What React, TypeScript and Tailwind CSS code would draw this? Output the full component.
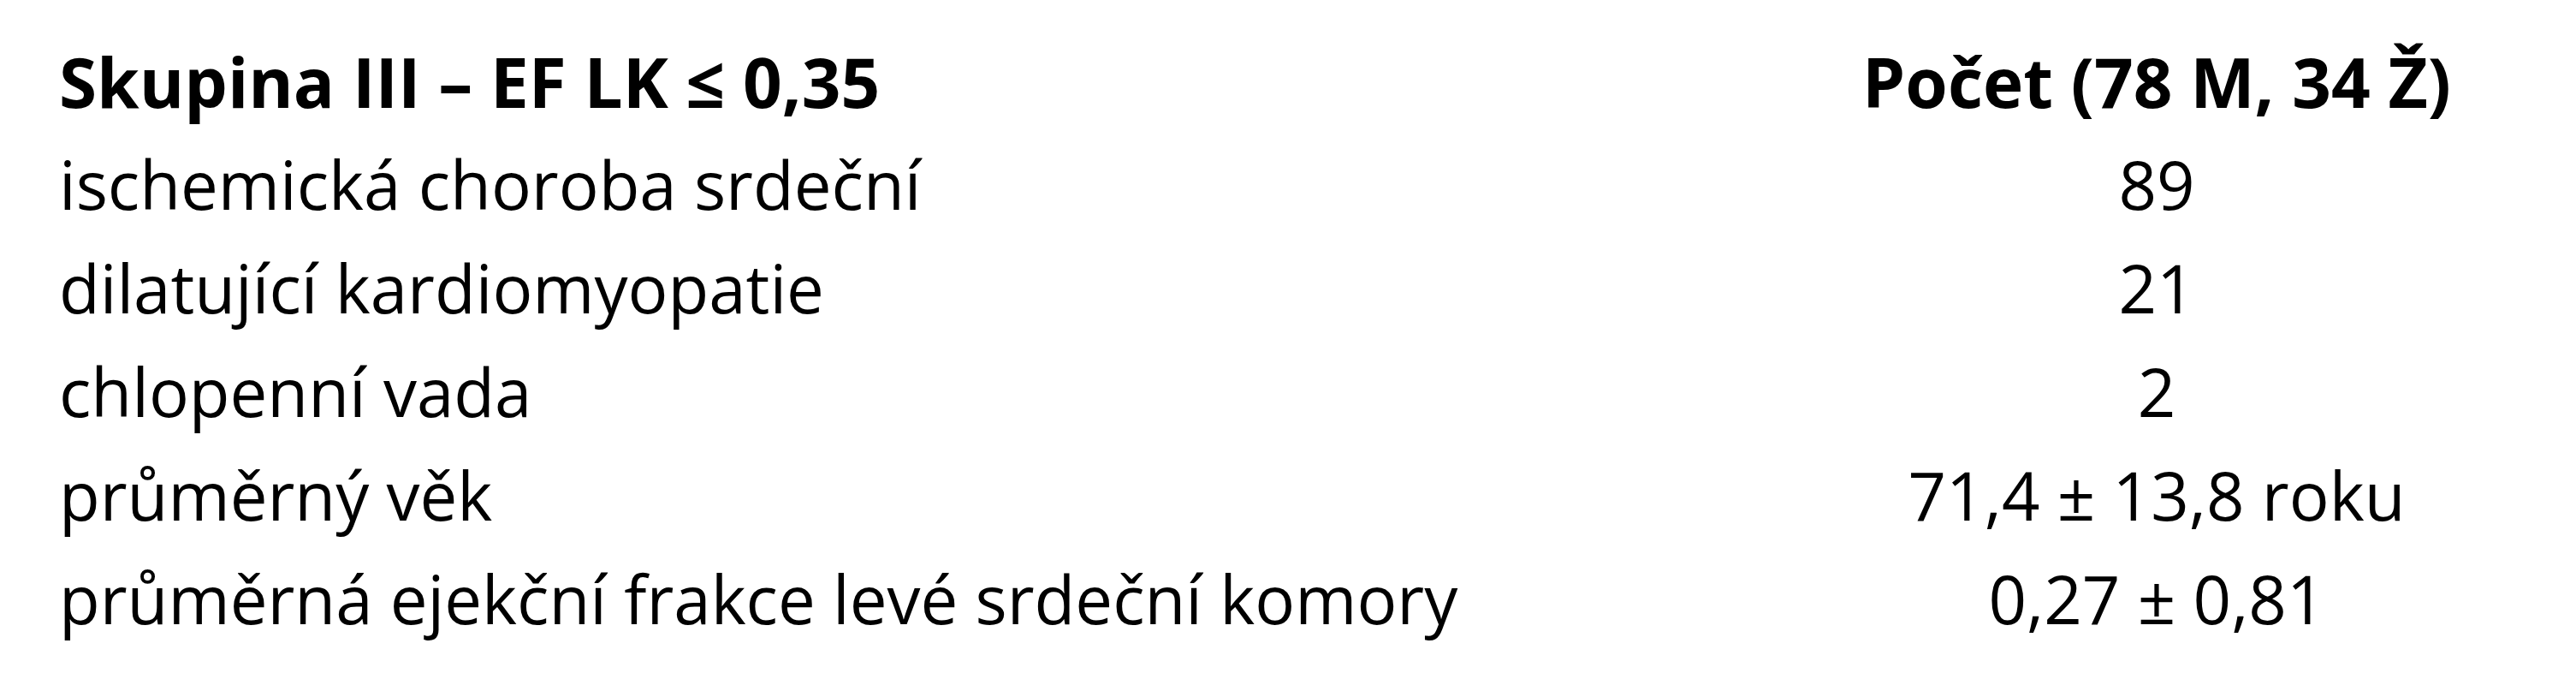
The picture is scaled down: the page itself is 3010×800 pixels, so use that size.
const rows = [
  { label: "ischemická choroba srdeční", value: "89" },
  { label: "dilatující kardiomyopatie", value: "21" },
  { label: "chlopenní vada", value: "2" },
  { label: "průměrný věk", value: "71,4 ± 13,8 roku" },
  { label: "průměrná ejekční frakce levé srdeční komory", value: "0,27 ± 0,81" },
];

export default function App() {
  return (
    <div
      className="w-[3010px] h-[800px] bg-white text-black pt-[34px] pl-[69px] text-[78px] leading-[121px]"
      style={{ fontFamily: '"Open Sans", "Noto Sans", sans-serif' }}
    >
      <div className="grid grid-cols-[1961px_980px]">
        <div className="font-bold text-[80px]">Skupina III – EF LK ≤ 0,35</div>
        <div className="font-bold text-[80px] text-center">Počet (78 M, 34 Ž)</div>
        {rows.map((row) => (
          <div key={row.label} className="contents">
            <div>{row.label}</div>
            <div className="text-center">{row.value}</div>
          </div>
        ))}
      </div>
    </div>
  );
}
